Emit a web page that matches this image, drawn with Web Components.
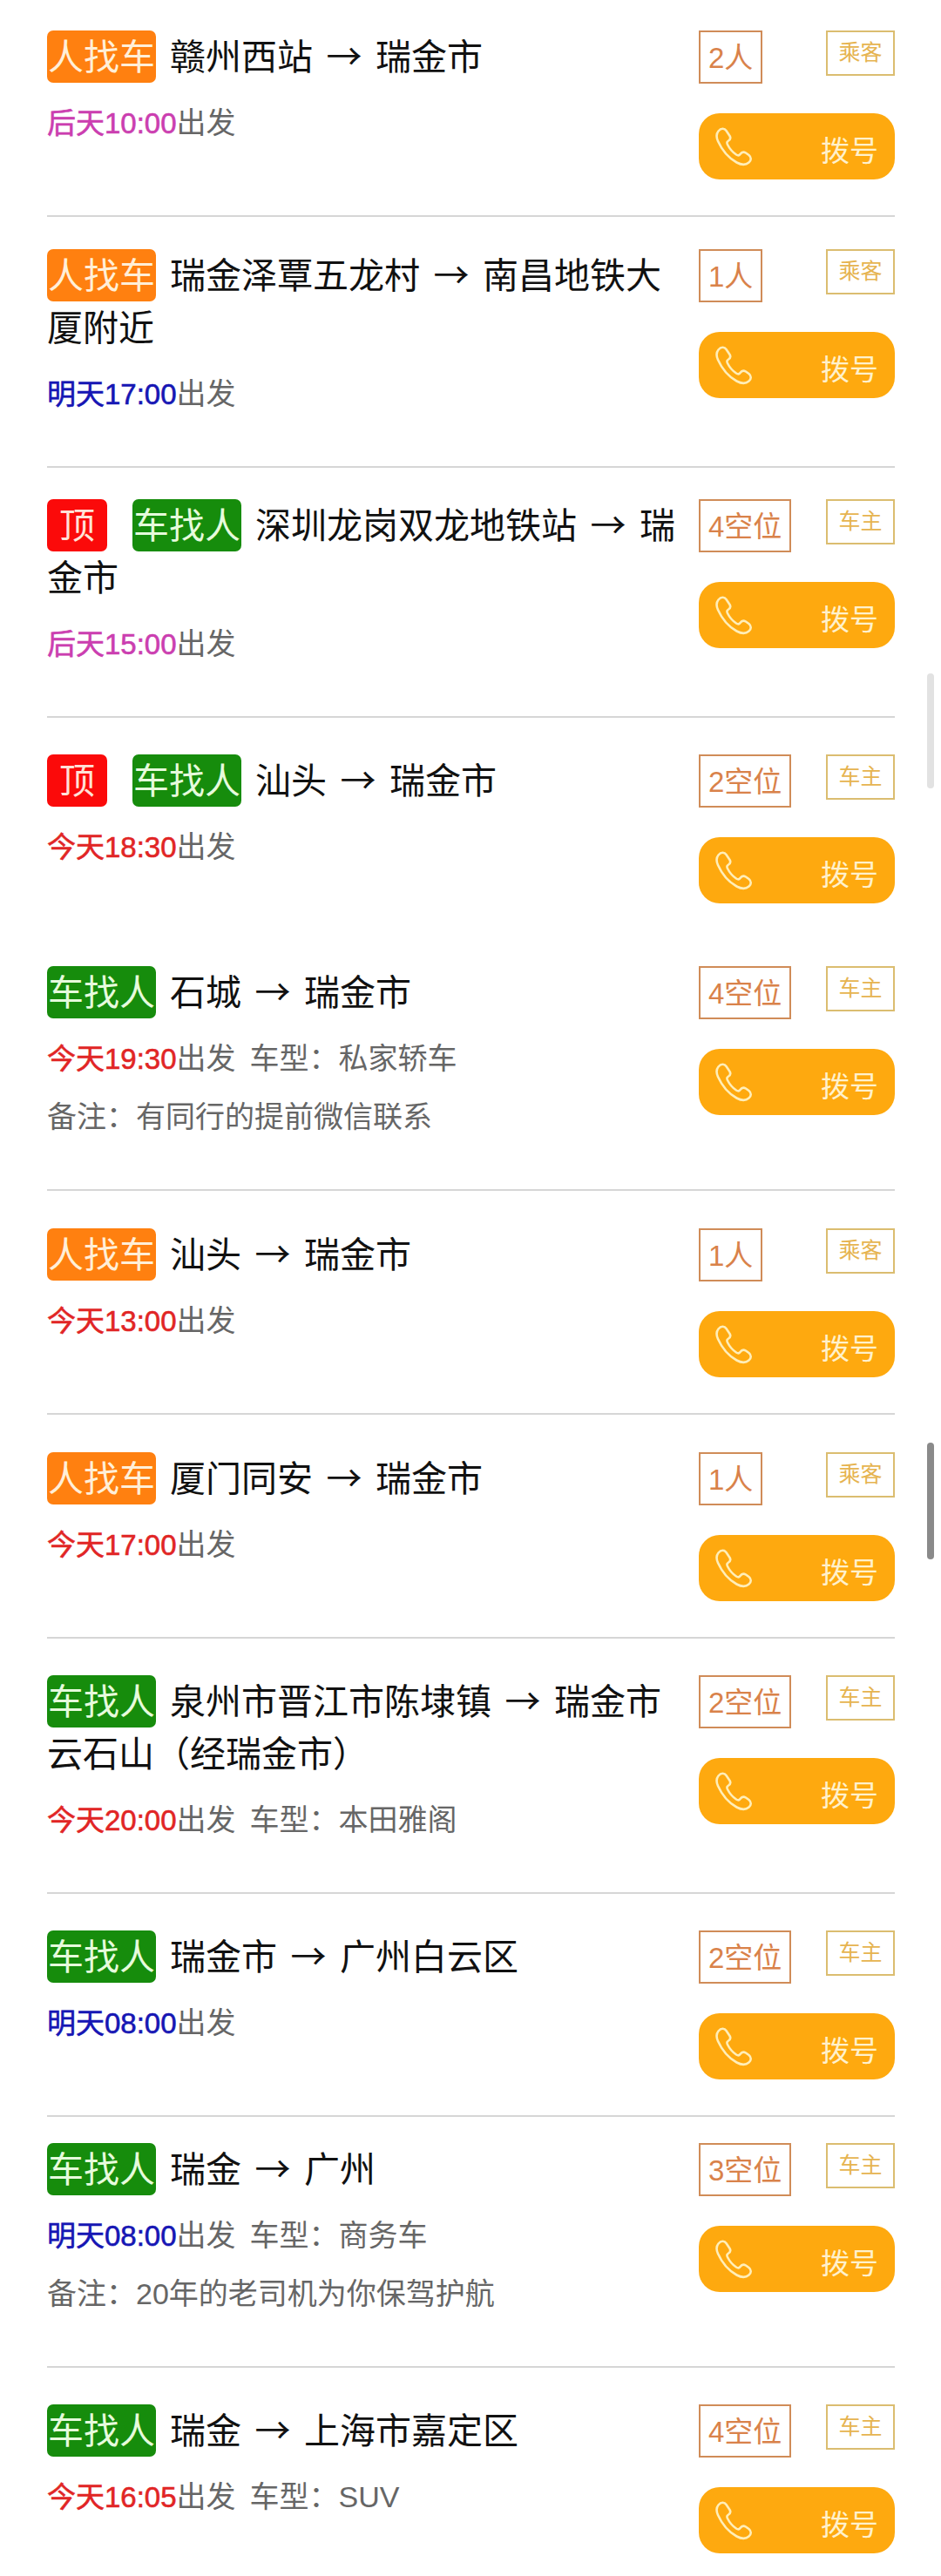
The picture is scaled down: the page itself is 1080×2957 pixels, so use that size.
<!DOCTYPE html>
<html lang="zh">
<head>
<meta charset="utf-8">
<title>拼车</title>
<style>
  html, body { margin: 0; background: #fff; }
  body { font-family: "Liberation Sans", "Noto Sans CJK SC", sans-serif; }
</style>
</head>
<body>
<trip-list></trip-list>

<script>
// pt = space above the tag, it is not the same on every row in the reference
const TRIPS = [
  { pt: 35, kind: 'ren', from: '赣州西站', to: '瑞金市', day: 'hou', time: '后天10:00', seats: '2人' },
  { pt: 37, kind: 'ren', from: '瑞金泽覃五龙村', to: '南昌地铁大厦附近', day: 'ming', time: '明天17:00', seats: '1人' },
  { pt: 36, kind: 'che', top: true, from: '深圳龙岗双龙地铁站', to: '瑞金市', day: 'hou', time: '后天15:00', seats: '4空位' },
  { pt: 42, kind: 'che', top: true, from: '汕头', to: '瑞金市', day: 'jin', time: '今天18:30', seats: '2空位', noline: true },
  { pt: 29, kind: 'che', from: '石城', to: '瑞金市', day: 'jin', time: '今天19:30', car: '私家轿车', note: '有同行的提前微信联系', seats: '4空位' },
  { pt: 43, kind: 'ren', from: '汕头', to: '瑞金市', day: 'jin', time: '今天13:00', seats: '1人' },
  { pt: 43, kind: 'ren', from: '厦门同安', to: '瑞金市', day: 'jin', time: '今天17:00', seats: '1人' },
  { pt: 42, kind: 'che', from: '泉州市晋江市陈埭镇', to: '瑞金市云石山（经瑞金市）', day: 'jin', time: '今天20:00', car: '本田雅阁', seats: '2空位' },
  { pt: 42, kind: 'che', from: '瑞金市', to: '广州白云区', day: 'ming', time: '明天08:00', seats: '2空位' },
  { pt: 30, kind: 'che', from: '瑞金', to: '广州', day: 'ming', time: '明天08:00', car: '商务车', note: '20年的老司机为你保驾护航', seats: '3空位' },
  { pt: 42, kind: 'che', from: '瑞金', to: '上海市嘉定区', day: 'jin', time: '今天16:05', car: 'SUV', seats: '4空位', noline: true },
];

class TripItem extends HTMLElement {
  constructor() {
    super();
    this.shadow = this.attachShadow({ mode: 'open' });
  }

  set trip(t) {
    const tagText = t.kind === 'ren' ? '人找车' : '车找人';
    const role = t.kind === 'ren' ? '乘客' : '车主';
    this.shadow.innerHTML = `
      <style>
        :host { display: block; margin: 0 53px 0 54px; }
        .row { display: flex; padding-top: ${t.pt}px; border-bottom: 2px solid #d6d6d6; }
        .row.noline { border-bottom-color: transparent; }
        .left { flex: 1; min-width: 0; padding-bottom: 49px; }
        /* the text sits 3px above the middle of its line, the tag does not */
        .title {
          font-family: "Noto Sans CJK SC", sans-serif; font-size: 41px; line-height: 60px;
          color: #111; width: 736px; margin-top: -3px;
        }
        .tag {
          display: inline-block; height: 60px; line-height: 54px; padding: 0 1px;
          border-radius: 7px; color: #fff; vertical-align: top;
          margin: 3px 16px -3px 0;
        }
        .ren { background: #ff8010; color: #ffefd8; }
        .che { background: #168c0c; color: #e6fbdc; }
        .top { background: #fb0a0a; color: #ffe2d8; padding: 0 14px; margin-right: 29px; }
        .arr { display: inline-block; width: 72px; text-align: center; }
        .meta { margin-top: 16px; font-size: 34px; line-height: 67px; color: #666; }
        .meta + .meta { margin-top: 0; }
        .time { font-size: 33px; -webkit-text-stroke: 0.6px currentColor; }
        .hou { color: #cb3eb0; }
        .ming { color: #1616b4; }
        .jin { color: #e12525; }
        .car { margin-left: 16px; }
        .right { width: 225px; flex: none; padding-bottom: 41px; }
        .badges { display: flex; justify-content: space-between; align-items: flex-start; height: 61px; margin-bottom: 34px; }
        .seats {
          box-sizing: border-box; height: 61px; line-height: 59px; padding: 0 9px;
          border: 2px solid #d08c58; color: #d9824a; font-size: 33px;
        }
        .role {
          box-sizing: border-box; width: 79px; height: 52px; line-height: 47px; text-align: center;
          border: 2px solid #dbbd70; color: #e6b450; font-size: 25px;
        }
        .call {
          display: flex; align-items: center; justify-content: space-between;
          height: 76px; padding: 0 19px 0 16px; border-radius: 24px; background: #fea90f;
          color: #fff1cc; font-size: 33px;
        }
        .call span { margin-top: 6px; }
        svg { display: block; width: 47px; height: 46px; }
      </style>
      <div class="row ${t.noline ? 'noline' : ''}">
        <div class="left">
          <div class="title">${t.top ? '<span class="tag top">顶</span>' : ''}<span class="tag ${t.kind}">${tagText}</span>${t.from}<span class="arr">→</span>${t.to}</div>
          <div class="meta"><span class="time ${t.day}">${t.time}</span>出发${t.car ? `<span class="car">车型：${t.car}</span>` : ''}</div>
          ${t.note ? `<div class="meta">备注：${t.note}</div>` : ''}
        </div>
        <div class="right">
          <div class="badges"><span class="seats">${t.seats}</span><span class="role">${role}</span></div>
          <div class="call">
            <svg viewBox="0 0 46 46" fill="none" stroke="#ffeeb8" stroke-width="2.6" stroke-linejoin="round">
              <path d="M6 5.5 C9 2 13 2 15 5 L19 11 C20.5 13.5 19.5 15.5 17 17 C15.5 18 15.5 19 16.5 21 C19 26 22 29.5 26.5 32.5 C28.5 33.8 30 33.5 31 32 C32.5 29.8 35 29 37.5 30.5 L41 33 C44 35.5 44 39 41 41.5 C37.5 44.5 32.5 44.5 27 41.5 C18 36.5 10 27 5.5 17 C3.5 12.5 3.5 8.5 6 5.5 Z"/>
            </svg>
            <span>拨号</span>
          </div>
        </div>
      </div>
    `;
  }
}

class TripList extends HTMLElement {
  constructor() {
    super();
    this.shadow = this.attachShadow({ mode: 'open' });
  }

  connectedCallback() {
    this.shadow.innerHTML = `
      <style>
        :host { display: block; position: relative; height: 2957px; overflow: hidden; }
        .bar { position: absolute; left: 1064px; width: 8px; border-radius: 4px; }
        .bar.a { top: 773px; height: 132px; background: #e2e2e2; }
        .bar.b { top: 1656px; height: 134px; background: #8a8a8a; }
      </style>
      <div class="list"></div>
      <div class="bar a"></div>
      <div class="bar b"></div>
    `;
    const list = this.shadow.querySelector('.list');
    TRIPS.forEach(t => {
      const item = document.createElement('trip-item');
      list.appendChild(item);
      item.trip = t;
    });
  }
}

customElements.define('trip-item', TripItem);
customElements.define('trip-list', TripList);
</script>
</body>
</html>
